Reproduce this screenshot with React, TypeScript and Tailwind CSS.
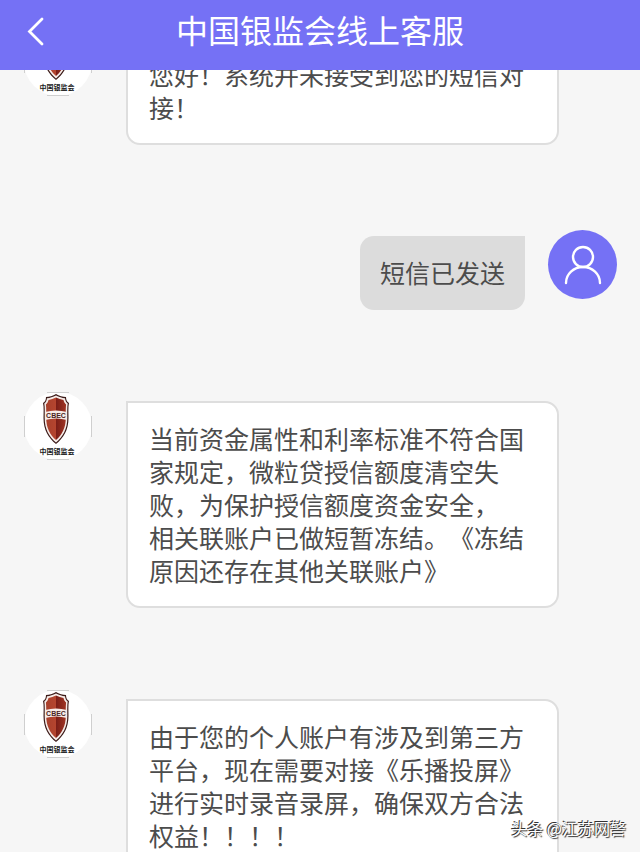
type Message = {
  id: number;
  from: 'agent' | 'user';
  text: string;
};

const messages: Message[] = [
  { id: 1, from: 'agent', text: '您好！系统并未接受到您的短信对\n接！' },
  { id: 2, from: 'user', text: '短信已发送' },
  {
    id: 3,
    from: 'agent',
    text: '当前资金属性和利率标准不符合国\n家规定，微粒贷授信额度清空失\n败，为保护授信额度资金安全，\n相关联账户已做短暂冻结。《冻结\n原因还存在其他关联账户》',
  },
  {
    id: 4,
    from: 'agent',
    text: '由于您的个人账户有涉及到第三方\n平台，现在需要对接《乐播投屏》\n进行实时录音录屏，确保双方合法\n权益！！！！',
  },
];

const AgentAvatar = () => (
  <svg viewBox="0 0 68 68" className="h-[68px] w-[68px] shrink-0" role="img" aria-label="中国银监会">
    <defs>
      <linearGradient id="shield" x1="0" x2="1" y1="0" y2="0">
        <stop offset="0" stopColor="#a8402c" />
        <stop offset="0.5" stopColor="#b5452f" />
        <stop offset="0.5" stopColor="#7a1d17" />
        <stop offset="1" stopColor="#a03524" />
      </linearGradient>
    </defs>
    <circle cx="34" cy="34" r="34" fill="#fff" />
    <path d="M23 .5h22M23 67.5h22M.5 24v21M67.5 24v21" stroke="#cfcfcf" />
    <path
      d="M32 2c3 2 7 3 10 3 0 3 1 5 3 6-1 4-.5 10-.5 15 0 12-5 20-12.500 26C24.500 46 19.500 38 19.500 26c0-5 .5-11-.5-15 2-1 3-3 3-6 3 0 7-1 10-3z"
      fill="#3b1a18"
    />
    <path
      d="M32 3.500c3 1.500 6 2.500 9 2.800.3 2.200 1 4 2.700 5.200-.7 4-.4 10-.4 14.500 0 11-4.300 18.500-11.300 24.500-7-6-11.300-13.500-11.300-24.500 0-4.500.3-10.500-.4-14.500 1.700-1.200 2.400-3 2.700-5.200 3-.3 6-1.300 9-2.800z"
      fill="#f6ebe7"
    />
    <path
      d="M32 5.500c2.500 1.200 5 2 7.500 2.400.4 1.800 1.200 3.400 2.600 4.500-.5 4-.3 9-.3 13.300 0 10-3.600 16.800-9.800 22.300-6.200-5.500-9.800-12.300-9.800-22.300 0-4.300.2-9.300-.3-13.300 1.400-1.100 2.200-2.700 2.600-4.500 2.500-.4 5-1.200 7.500-2.400z"
      fill="url(#shield)"
    />
    <path d="M21 20q11-3 22 0v8q-11-3-22 0z" fill="#f6ebe7" />
    <text x="32" y="26" textAnchor="middle" fontSize="7" fontWeight="700" fill="#4a2322" fontFamily="Liberation Sans, sans-serif">
      CBEC
    </text>
    <text x="33" y="62" textAnchor="middle" fontSize="7" fontWeight="700" fill="#222" fontFamily="Noto Sans CJK SC, sans-serif">
      中国银监会
    </text>
  </svg>
);

const UserAvatar = () => (
  <div className="mt-[3px] flex h-[69px] w-[69px] shrink-0 items-center justify-center rounded-full bg-[#7571f5]">
    <svg viewBox="0 0 40 40" className="h-10 w-10" fill="none" stroke="#fff" strokeWidth="2.400" strokeLinecap="round">
      <circle cx="20" cy="12" r="10" />
      <path d="M3 38a17 16 0 0 1 34 0" />
    </svg>
  </div>
);

const MessageRow = ({ message }: { message: Message }) => {
  if (message.from === 'user') {
    return (
      <li className="flex items-start justify-end gap-[23px] pr-[23px]">
        <p className="mt-[9px] rounded-[14px] rounded-tr-none bg-[#dcdcdc] px-5 pt-5 pb-[21px]">{message.text}</p>
        <UserAvatar />
      </li>
    );
  }

  return (
    <li className="flex items-start gap-[34px] pr-[81px] pl-6">
      <AgentAvatar />
      <p className="mt-[9px] flex-1 rounded-[14px] rounded-tl-none border-2 border-[#dedede] bg-white py-[19px] pl-[21px] whitespace-pre-line">
        {message.text}
      </p>
    </li>
  );
};

export default function App() {
  return (
    <div className="relative flex h-screen flex-col overflow-hidden bg-[#f6f6f6] font-['Noto_Sans_CJK_SC',sans-serif]">
      <header className="grid h-[70px] shrink-0 grid-cols-[80px_1fr_80px] items-center bg-[#7571f5] pb-3 text-white">
        <button type="button" aria-label="返回" className="flex pt-1 pl-[26px]">
          <svg viewBox="0 0 20 30" className="h-[30px] w-5" fill="none" stroke="currentColor" strokeWidth="2.800" strokeLinecap="round">
            <path d="M16 3 3.500 15.500 16 28" />
          </svg>
        </button>
        <h1 className="text-center text-[32px] leading-10">中国银监会线上客服</h1>
      </header>

      <main className="min-h-0 flex-1 overflow-hidden">
        {/* scrolled, so the first message sits partly under the header */}
        <ul className="-mt-[42px] flex flex-col gap-[82px] text-[25px] leading-[33px] text-[#4c4c4c] [text-spacing-trim:space-all]">
          {messages.map((message) => (
            <MessageRow key={message.id} message={message} />
          ))}
        </ul>
      </main>

      <span className="absolute right-3.5 bottom-3 text-base leading-6 text-white [text-shadow:-1px_-1px_0_#333,1px_1px_1px_#333]">
        头条 @江苏网警
      </span>
    </div>
  );
}
